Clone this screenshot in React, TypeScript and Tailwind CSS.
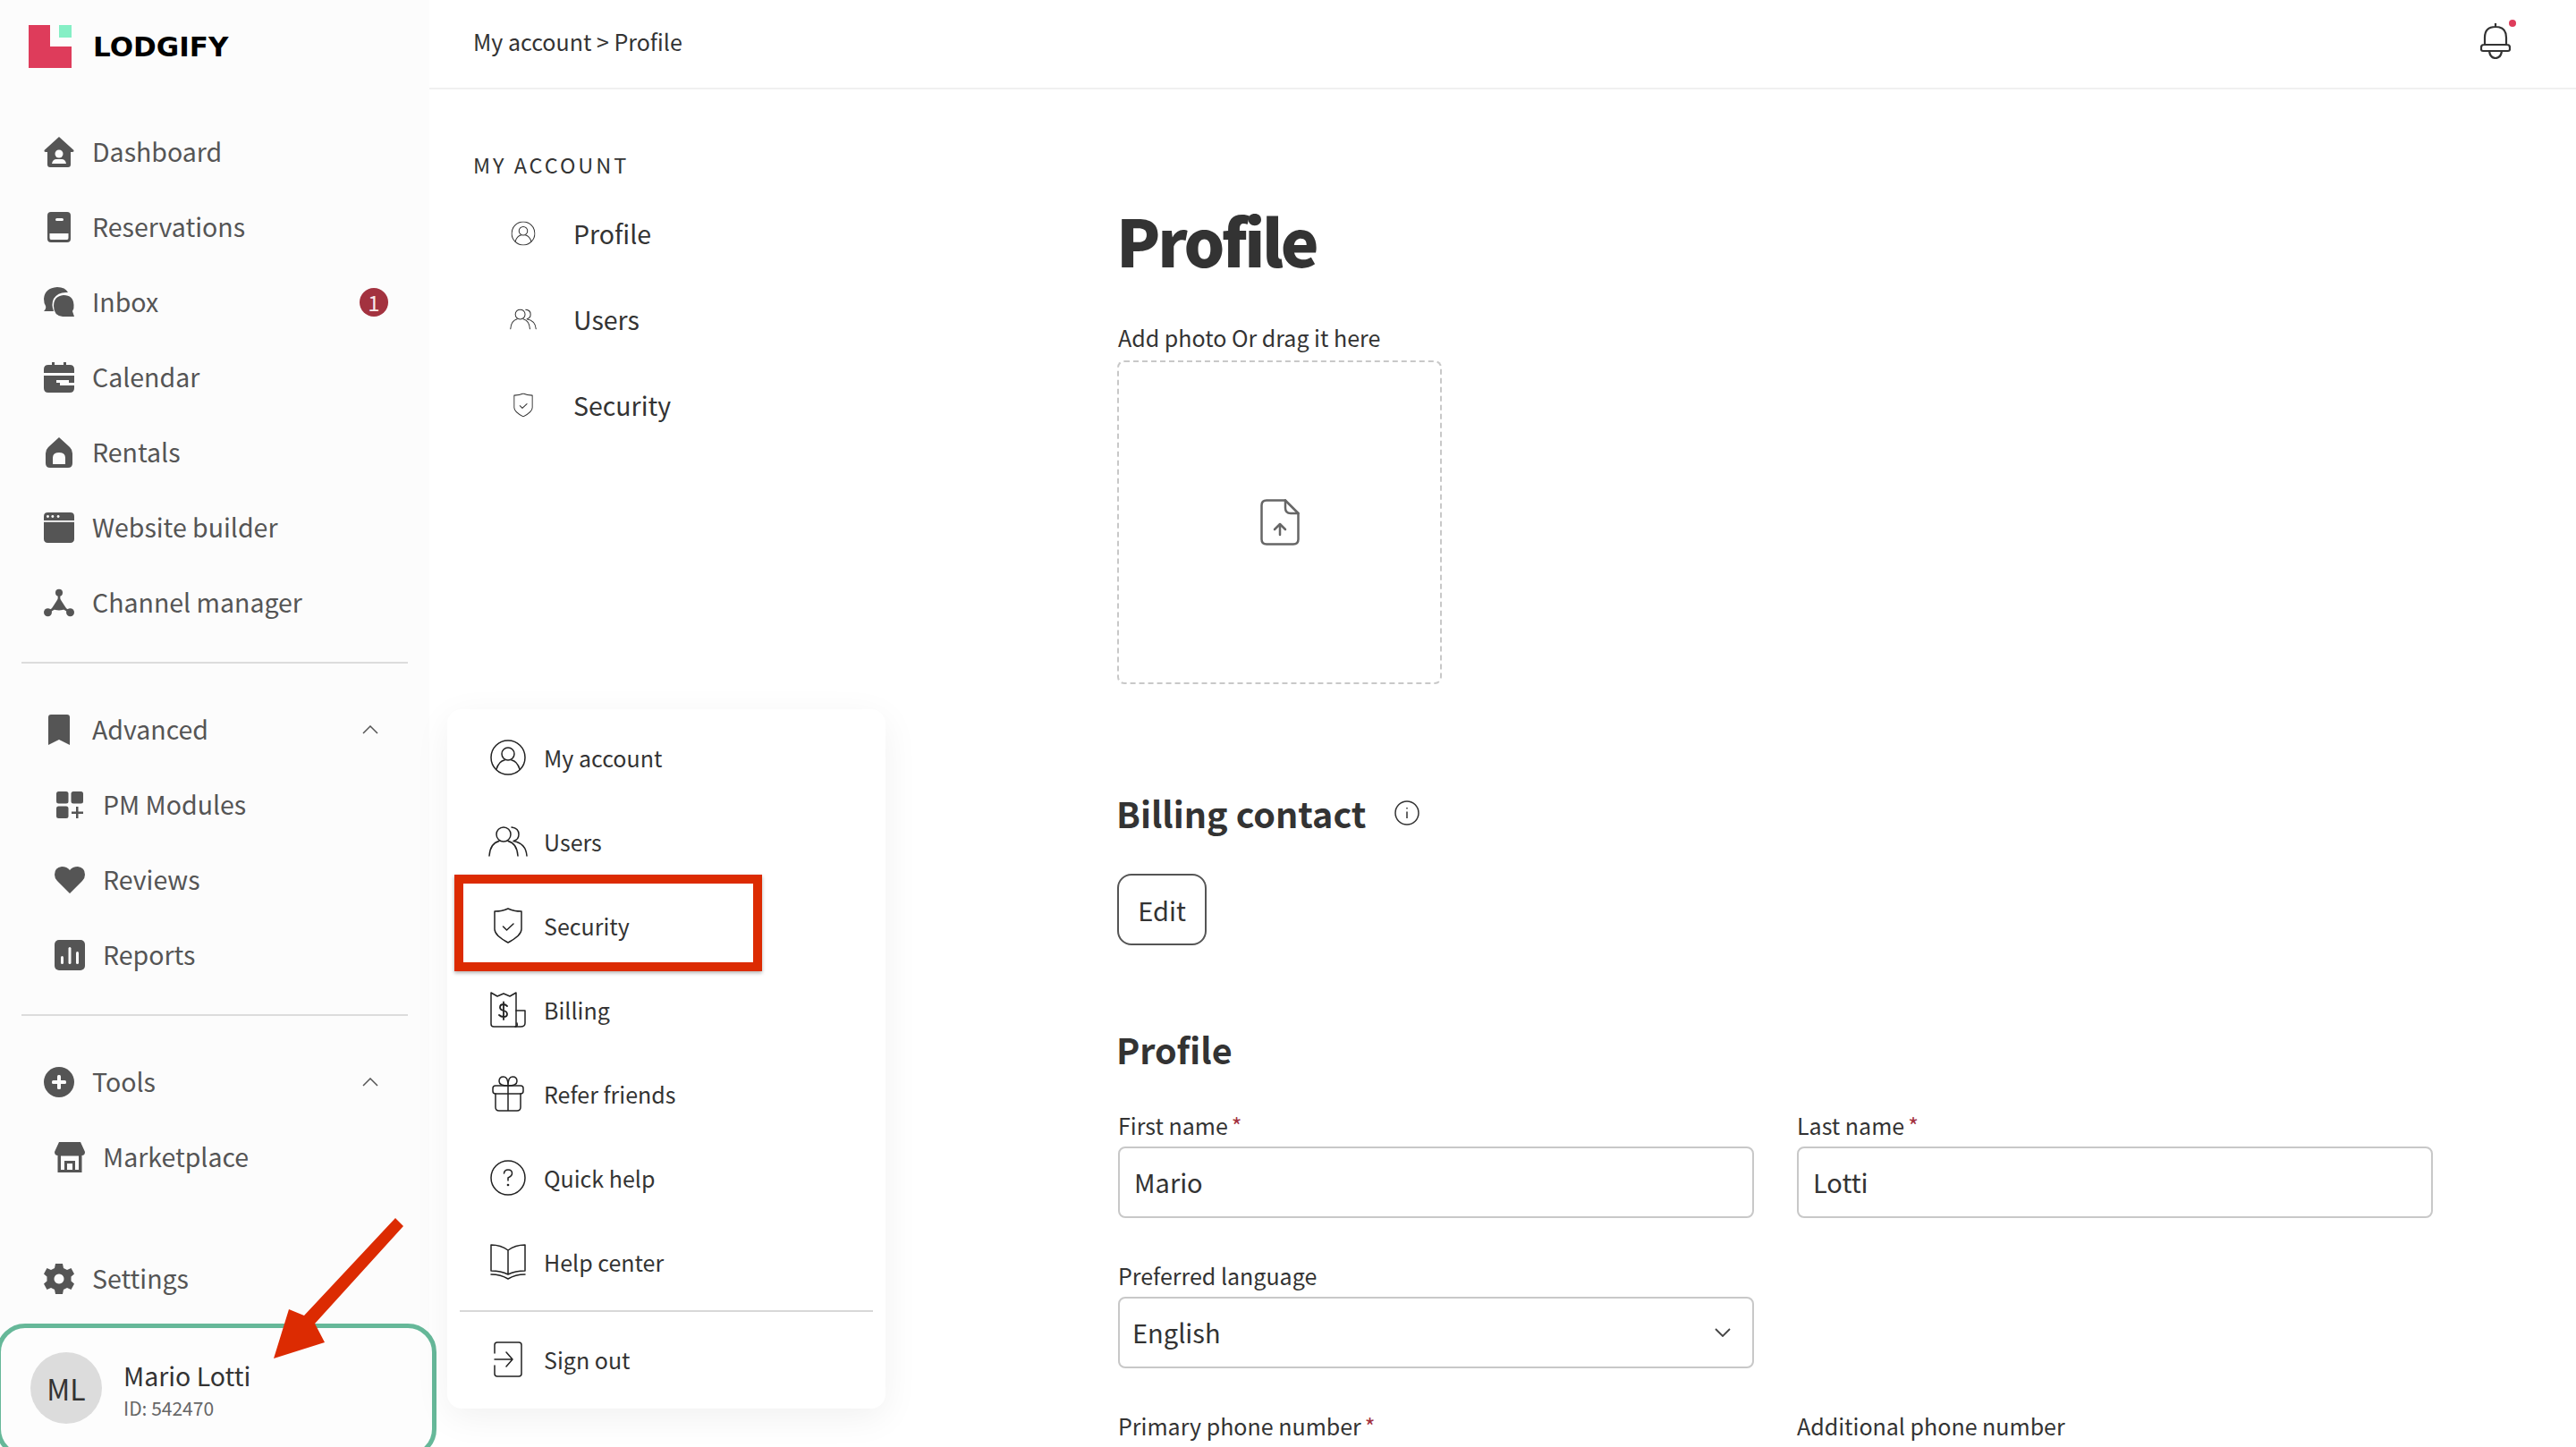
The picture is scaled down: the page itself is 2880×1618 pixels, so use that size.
import type { ReactNode } from "react";

const Dashboard = () => (
  <svg viewBox="0 0 34 34" className="w-[34px] h-[34px]" fill="#555">
    <path d="M17 0 L33.500 15 Q34 17 32 17 L30 17 L30 31 Q30 34 27 34 L7 34 Q4 34 4 31 L4 17 L2 17 Q0 17 .5 15 Z" />
    <circle cx="17" cy="19" r="4.500" fill="#fcfcfc" />
    <path d="M9 30 Q10 25 14 25 L20 25 Q24 25 25 30 Z" fill="#fcfcfc" />
  </svg>
);
const Reservations = () => (
  <svg viewBox="0 0 34 34" className="w-[34px] h-[34px]" fill="#555">
    <rect x="4" y="0" width="26" height="34" rx="4" />
    <rect x="13" y="7" width="9" height="3" rx="1.500" fill="#fcfcfc" />
    <path d="M6.500 24 L27.500 24 L27.500 29 Q27.500 31 26 31 L8 31 Q6.500 31 6.500 29 Z" fill="#fcfcfc" />
  </svg>
);
const Inbox = () => (
  <svg viewBox="0 0 34 34" className="w-[34px] h-[34px]" fill="#555">
    <path d="M15 0 Q24 0 27 6 Q16 5 11 13 Q8 19 11 27 L0 27 Q3 24 2 21 Q0 18 0 13 Q1 1 15 0 Z" />
    <path d="M22 9 Q33 9 33.500 20 Q34 24 32 27 L34 33 L21 33 Q11 32 11 21 Q11 10 22 9 Z" />
  </svg>
);
const Calendar = () => (
  <svg viewBox="0 0 34 34" className="w-[34px] h-[34px]" fill="#555">
    <rect x="9" y="0" width="3" height="5" />
    <rect x="22" y="0" width="3" height="5" />
    <path d="M5 3 L29 3 Q34 3 34 8 L34 12 L0 12 L0 8 Q0 3 5 3 Z" />
    <path d="M0 15 L34 15 L34 20 L14 20 L14 23 L0 23 Z" />
    <path d="M0 23 L18 23 L18 26 L34 26 L34 29 Q34 34 29 34 L5 34 Q0 34 0 29 Z" />
    <rect x="19" y="23" width="15" height="3" fill="#fcfcfc" />
    <rect x="28" y="20" width="6" height="3" />
  </svg>
);
const Rentals = () => (
  <svg viewBox="0 0 34 34" className="w-[34px] h-[34px]" fill="#555" fillRule="evenodd">
    <path d="M17 0 L29 11 Q32 14 32 18 L32 29 Q32 34 27 34 L7 34 Q2 34 2 29 L2 18 Q2 14 5 11 Z M10 30 L24 30 L24 23 Q24 17 17 17 Q10 17 10 23 Z" />
  </svg>
);
const Website = () => (
  <svg viewBox="0 0 38 38" className="w-[38px] h-[38px]" fill="#555">
    <path d="M5 0 L33 0 Q38 0 38 5 L38 10 L0 10 L0 5 Q0 0 5 0 Z" />
    <path d="M0 12 L38 12 L38 33 Q38 38 33 38 L5 38 Q0 38 0 33 Z" />
    <circle cx="5" cy="5" r="1.600" fill="#fcfcfc" />
    <circle cx="11" cy="5" r="1.600" fill="#fcfcfc" />
    <circle cx="18" cy="5" r="1.600" fill="#fcfcfc" />
  </svg>
);
const Channel = () => (
  <svg viewBox="0 0 38 34" className="w-[38px] h-[34px]" fill="#555" stroke="#555">
    <circle cx="19" cy="4.500" r="4.500" stroke="none" />
    <circle cx="5" cy="29" r="5" stroke="none" />
    <circle cx="33" cy="29" r="5" stroke="none" />
    <path d="M19 6 L19 20 L5 29 M19 20 L33 29" strokeWidth="3" fill="none" />
    <path d="M19 10 L28 24 Q19 29 10 24 Z" stroke="none" />
  </svg>
);
const Bookmark = () => (
  <svg viewBox="0 0 34 34" className="w-[34px] h-[34px]" fill="#555">
    <path d="M5 3 Q5 0 8 0 L26 0 Q29 0 29 3 L29 34 L17 28 L5 34 Z" />
  </svg>
);
const Modules = () => (
  <svg viewBox="0 0 30 30" className="w-[30px] h-[30px]" fill="#555">
    <rect width="13.500" height="13.500" rx="2.500" />
    <rect x="16.500" width="13.500" height="13.500" rx="2.500" />
    <rect y="16.500" width="13.500" height="13.500" rx="2.500" />
    <rect x="22" y="17" width="2.500" height="13" />
    <rect x="17" y="22.500" width="13" height="2.500" />
  </svg>
);
const Heart = () => (
  <svg viewBox="0 0 34 30" className="w-[34px] h-[30px]" fill="#555">
    <path d="M17 30 L3 16 Q0 13 0 9 Q0 1 8 0 Q14 0 17 4 Q20 0 26 0 Q34 1 34 9 Q34 13 31 16 Z" />
  </svg>
);
const ReportsIcon = () => (
  <svg viewBox="0 0 34 34" className="w-[34px] h-[34px]" fill="#555">
    <rect width="34" height="34" rx="5" />
    <rect x="7" y="18" width="3" height="9" rx="1.500" fill="#fcfcfc" />
    <rect x="15.500" y="8" width="3" height="19" rx="1.500" fill="#fcfcfc" />
    <rect x="24" y="13" width="3" height="14" rx="1.500" fill="#fcfcfc" />
  </svg>
);
const Plus = () => (
  <svg viewBox="0 0 34 34" className="w-[34px] h-[34px]" fill="#555">
    <circle cx="17" cy="17" r="17" />
    <rect x="15" y="9" width="4" height="16" rx="1.500" fill="#fcfcfc" />
    <rect x="9" y="15" width="16" height="4" rx="1.500" fill="#fcfcfc" />
  </svg>
);
const Store = () => (
  <svg viewBox="0 0 34 34" className="w-[34px] h-[34px]" fill="#555" fillRule="evenodd">
    <path d="M5 0 L29 0 L34 11 Q34 15 30.500 15 L30.500 34 L3.500 34 L3.500 15 Q0 15 0 11 Z M7 15.500 L7 31 L11 31 L11 21 L23 21 L23 31 L27 31 L27 15.500 Z M14 24 L14 31 L20 31 L20 24 Z" />
  </svg>
);
const Gear = () => (
  <svg viewBox="0 0 34 34" className="w-[34px] h-[34px]" fill="#555" fillRule="evenodd">
    <path d="M13 0 L21 0 L22 5 L26 7 L30.500 5 L34 11.500 L30.500 14.500 L30.500 19.500 L34 22.500 L30.500 29 L26 27 L22 29 L21 34 L13 34 L12 29 L8 27 L3.500 29 L0 22.500 L3.500 19.500 L3.500 14.500 L0 11.500 L3.500 5 L8 7 L12 5 Z M17 11.500 A5.500 5.500 0 1 0 17.010 11.500 Z" />
  </svg>
);
const Chevron = () => (
  <svg viewBox="0 0 18 10" className="w-[18px] h-[10px]" fill="none" stroke="#555" strokeWidth="1.500">
    <path d="M1 9 L9 1 L17 9" />
  </svg>
);

const MenuIcon = ({ children, w = 40, h = 40 }: { children: ReactNode; w?: number; h?: number }) => (
  <svg
    viewBox={`0 0 ${w} ${h}`}
    width={w}
    height={h}
    fill="none"
    stroke="currentColor"
    strokeWidth="1.500"
    strokeLinecap="round"
    strokeLinejoin="round"
  >
    {children}
  </svg>
);
const PersonGlyph = () => (
  <MenuIcon>
    <circle cx="20" cy="20" r="19" />
    <circle cx="20" cy="16" r="7" />
    <path d="M7 33 Q10 24 16 23 M33 33 Q30 24 24 23" />
  </MenuIcon>
);
const UsersGlyph = () => (
  <MenuIcon w={44} h={34}>
    <circle cx="17" cy="9" r="8" />
    <path d="M1 33 Q2 19 12 16.500 M22 16.500 Q32 19 33 33" />
    <path d="M26 1 Q34 2 34 9 Q34 15 28 16.500 Q42 19 43 33" />
  </MenuIcon>
);
const ShieldGlyph = () => (
  <MenuIcon w={32} h={40}>
    <path d="M1 4 Q10 4 16 1 Q22 4 31 4 L31 24 Q31 31 16 39 Q1 31 1 24 Z" />
    <path d="M10.500 21 L14.500 25 L22 18" />
  </MenuIcon>
);
const BillGlyph = () => (
  <MenuIcon>
    <path d="M1 1 L8 5 L15 2 L22 5 L29 1 L29 39 L4 39 Q1 39 1 36 Z" />
    <path d="M29 21 L39 21 L39 35 Q39 39 34 39 L28 39 Q31 39 30 35" />
    <path d="M19 16 Q17 14 15 14 Q11 14 11 17.500 Q11 20 15 21 Q19 22 19 25 Q19 28 15 28 Q12 28 10 26 M15 11.500 L15 31" strokeWidth="1.800" />
  </MenuIcon>
);
const GiftGlyph = () => (
  <MenuIcon w={36} h={40}>
    <rect x="1" y="11" width="34" height="9" rx="3" />
    <path d="M4 20 L4 35 Q4 39 8 39 L28 39 Q32 39 32 35 L32 20 M18 11 L18 39" />
    <path d="M18 11 Q8 11 8 6 Q8 1 13 1 Q18 1 18 11 Q18 1 23 1 Q28 1 28 6 Q28 11 18 11" />
  </MenuIcon>
);
const HelpGlyph = () => (
  <MenuIcon>
    <circle cx="20" cy="20" r="19" />
    <path d="M15.500 15 Q16 11 20 11 Q24.500 11 24.500 15 Q24.500 18 20 20 L20 23" />
    <circle cx="20" cy="28" r=".6" />
  </MenuIcon>
);
const BookGlyph = () => (
  <MenuIcon>
    <path d="M20 7 Q12 1 1 1 L1 30 Q12 30 20 34 Q28 30 39 30 L39 1 Q28 1 20 7 L20 34" />
    <path d="M1 34 Q12 34 20 39 Q28 34 39 34" />
  </MenuIcon>
);
const SignOutGlyph = () => (
  <MenuIcon w={32} h={40}>
    <path d="M1 13 L1 4 Q1 1 4 1 L28 1 Q31 1 31 4 L31 36 Q31 39 28 39 L4 39 Q1 39 1 36 L1 27" />
    <path d="M1 20 L21 20 M14 12 L21 20 L14 28" />
  </MenuIcon>
);

const NavRow = ({ icon, label, child }: { icon: ReactNode; label: string; child?: boolean }) => (
  <div className={`flex h-[84px] items-center ${child ? "pl-[61px]" : "pl-[49px]"}`}>
    <div className="flex w-[34px] shrink-0 justify-center">{icon}</div>
    <span className="ml-5 -translate-y-px text-[28.500px] leading-none text-[#555]">{label}</span>
  </div>
);

const Divider = () => <div className="mx-6 mt-6 mb-8 h-0.5 w-[432px] bg-[#dcdcdc]" />;

const menuItems: { icon: ReactNode; label: string }[] = [
  { icon: <PersonGlyph />, label: "My account" },
  { icon: <UsersGlyph />, label: "Users" },
  { icon: <ShieldGlyph />, label: "Security" },
  { icon: <BillGlyph />, label: "Billing" },
  { icon: <GiftGlyph />, label: "Refer friends" },
  { icon: <HelpGlyph />, label: "Quick help" },
  { icon: <BookGlyph />, label: "Help center" },
];

const MenuRow = ({ icon, label }: { icon: ReactNode; label: string }) => (
  <div className="flex h-[94px] items-center pl-11">
    <div className="flex w-12 shrink-0 justify-center text-[#222]">{icon}</div>
    <span className="ml-4 text-[25px] leading-none text-[#333]">{label}</span>
  </div>
);

const Field = ({ label, required, value, select }: { label: string; required?: boolean; value?: string; select?: boolean }) => (
  <div className="w-[711px]">
    <div className="h-[28px] text-[25px] leading-[28px] text-[#333]">
      {label}
      {required && <span className="ml-1 text-[#a3323f]">*</span>}
    </div>
    {value && (
      <div className={`mt-[10px] flex h-[80px] items-center justify-between rounded-lg border-2 border-[#c8c8c8] pr-6 text-[29px] text-[#333] ${select ? "pl-[14px]" : "pl-4"}`}>
        {value}
        {select && (
          <svg viewBox="0 0 18 10" className="h-[10px] w-[18px]" fill="none" stroke="#444" strokeWidth="1.800">
            <path d="M1 1 L9 9 L17 1" />
          </svg>
        )}
      </div>
    )}
  </div>
);

const App = () => (
  <div className="relative flex h-[1618px] w-[2880px] overflow-hidden bg-white font-['Noto_Sans_CJK_JP',sans-serif]">
    <aside className="w-[480px] shrink-0 bg-[#fcfcfc]">
      <div className="flex h-[128px] items-start pt-7 pl-8">
        <svg viewBox="0 0 48 48" className="h-12 w-12">
          <path d="M0 0 H24 V24 H48 V48 H0 Z" fill="#de3c5b" />
          <rect x="34" y="0" width="14" height="14" fill="#85efc5" />
        </svg>
        <span className="mt-[4px] ml-6 font-['DejaVu_Sans',sans-serif] text-[31px] leading-10 font-bold text-black">
          LODGIFY
        </span>
      </div>
      <NavRow icon={<Dashboard />} label="Dashboard" />
      <NavRow icon={<Reservations />} label="Reservations" />
      <div className="relative">
        <NavRow icon={<Inbox />} label="Inbox" />
        <span className="absolute top-[26px] left-[402px] flex h-8 w-8 items-center justify-center rounded-full bg-[#a3323f] text-[24px] leading-none text-[#f8e8ea]">
          1
        </span>
      </div>
      <NavRow icon={<Calendar />} label="Calendar" />
      <NavRow icon={<Rentals />} label="Rentals" />
      <NavRow icon={<Website />} label="Website builder" />
      <NavRow icon={<Channel />} label="Channel manager" />
      <Divider />
      <div className="flex items-center justify-between pr-[57px]">
        <NavRow icon={<Bookmark />} label="Advanced" />
        <Chevron />
      </div>
      <NavRow child icon={<Modules />} label="PM Modules" />
      <NavRow child icon={<Heart />} label="Reviews" />
      <NavRow child icon={<ReportsIcon />} label="Reports" />
      <Divider />
      <div className="flex items-center justify-between pr-[57px]">
        <NavRow icon={<Plus />} label="Tools" />
        <Chevron />
      </div>
      <NavRow child icon={<Store />} label="Marketplace" />
      <div className="mt-[52px]">
        <NavRow icon={<Gear />} label="Settings" />
      </div>
      <div className="relative z-10 mt-2 -ml-1 flex h-[150px] w-[492px] items-start rounded-[32px] border-[5px] border-[#66b899] bg-[#fdfdfd] pt-[27px] pl-[33px]">
        <div className="flex h-20 w-20 shrink-0 items-center justify-center rounded-full bg-[#dcdcdc] text-[32px] leading-none text-[#333]">
          ML
        </div>
        <div className="ml-6">
          <div className="mt-[7px] text-[28.500px] leading-[38px] text-[#333]">Mario Lotti</div>
          <div className="mt-[3px] text-[21px] leading-[28px] text-[#666]">ID: 542470</div>
        </div>
      </div>
    </aside>

    <div className="flex min-w-0 flex-1 flex-col">
      <header className="flex h-[100px] shrink-0 items-center justify-between border-b-2 border-[#f0f0f0] pr-[73px] pl-[49px]">
        <span className="-mt-[6px] text-[25px] leading-none text-[#333]">My account &gt; Profile</span>
        <div className="relative -mt-[6px]">
          <svg viewBox="0 0 34 40" className="h-10 w-[34px]" fill="none" stroke="#333" strokeWidth="2.200">
            <path d="M17 0 V4 M5 24 V16 Q5 4 17 4 Q29 4 29 16 V24 M4 24 H30 Q33 24 33 27 V29 Q33 31 31 31 H3 Q1 31 1 29 V27 Q1 24 4 24 Z M10 31 Q11 39 17 39 Q23 39 24 31" />
          </svg>
          <span className="absolute -top-[4px] right-[-6px] h-2 w-2 rounded-full bg-[#de3c5b]" />
        </div>
      </header>

      <div className="flex min-h-0 flex-1">
        <nav className="w-[770px] shrink-0 pt-[69px] pl-[49px]">
          <div className="text-[23.500px] leading-[30px] tracking-[0.125em] text-[#333]">MY ACCOUNT</div>
          <div className="mt-[14px]">
            {[
              { icon: <PersonGlyph />, label: "Profile" },
              { icon: <UsersGlyph />, label: "Users" },
              { icon: <ShieldGlyph />, label: "Security" },
            ].map((item) => (
              <div key={item.label} className="flex h-[96px] items-center">
                <div className="flex w-[112px] shrink-0 justify-center text-[#333] [&>svg]:scale-[0.68]">
                  {item.icon}
                </div>
                <span className="text-[28.500px] leading-none text-[#333]">{item.label}</span>
              </div>
            ))}
          </div>
        </nav>

        <main className="w-[1480px] shrink-0 pt-[120px]">
          <h1 className="-ml-[2px] text-[72px] leading-[96px] font-black tracking-[-0.045em] text-[#333]">Profile</h1>
          <div className="mt-[45px] text-[25px] leading-[32px] text-[#333]">Add photo Or drag it here</div>
          <div className="mt-[10px] -ml-px flex h-[362px] w-[363px] items-center justify-center rounded-lg border-2 border-dashed border-[#c8c8c8]">
            <svg viewBox="0 0 44 52" className="h-[52px] w-[44px]" fill="none" stroke="#666" strokeWidth="2.500" strokeLinejoin="round" strokeLinecap="round">
              <path d="M28 1.500 H7 Q1.500 1.500 1.500 7 V45 Q1.500 50.500 7 50.500 H37 Q42.500 50.500 42.500 45 V16 Z" />
              <path d="M28 1.500 V10 Q28 16 34 16 H42.500" />
              <path d="M22 40 V29 M16 34 L22 28 L28 34" />
            </svg>
          </div>

          <div className="mt-[116px] -ml-[2px] flex items-center">
            <h2 className="text-[39.500px] leading-[56px] font-bold text-[#333]">Billing contact</h2>
            <svg viewBox="0 0 28 28" className="ml-[32px] h-7 w-7" fill="none" stroke="#333" strokeWidth="1.500">
              <circle cx="14" cy="14" r="13" />
              <path d="M14 12.500 V20 M14 8 V9.500" />
            </svg>
          </div>
          <button className="mt-[40px] -ml-px flex h-20 w-[100px] items-center justify-center rounded-2xl border-2 border-[#555] text-[29px] leading-none text-[#333]">
            Edit
          </button>
          <h2 className="mt-[88px] -ml-[2px] text-[39.500px] leading-[56px] font-bold text-[#333]">Profile</h2>

          <div className="mt-[43px] flex gap-[48px]">
            <Field label="First name" required value="Mario" />
            <Field label="Last name" required value="Lotti" />
          </div>
          <div className="mt-[50px]">
            <Field label="Preferred language" value="English" select />
          </div>
          <div className="mt-[50px] flex gap-[48px]">
            <Field label="Primary phone number" required />
            <Field label="Additional phone number" />
          </div>
        </main>
      </div>
    </div>

    {/* account popup */}
    <div className="absolute top-[793px] left-[500px] z-20 h-[782px] w-[490px] rounded-2xl bg-white pt-[7px] shadow-[0_10px_40px_rgba(0,0,0,0.06)]">
      {menuItems.map((item) => (
        <MenuRow key={item.label} icon={item.icon} label={item.label} />
      ))}
      <div className="mx-3.5 mt-[7px] h-0.5 bg-[#d8d8d8]" />
      <div className="mt-[6px]">
        <MenuRow icon={<SignOutGlyph />} label="Sign out" />
      </div>
    </div>

    {/* screenshot annotations */}
    <div className="absolute top-[978px] left-[508px] z-30 h-[108px] w-[344px] border-[10px] border-[#dc2b02] shadow-[0_2px_4px_rgba(0,0,0,0.3)]" />
    <svg viewBox="0 0 160 170" className="absolute top-[1362px] left-[296px] z-30 h-[170px] w-[160px]">
      <path d="M146 0 L155 9 L56 118 L67 139 L10 157 L27 102 L44 109 Z" fill="#dc2b02" />
    </svg>
  </div>
);

export default App;
